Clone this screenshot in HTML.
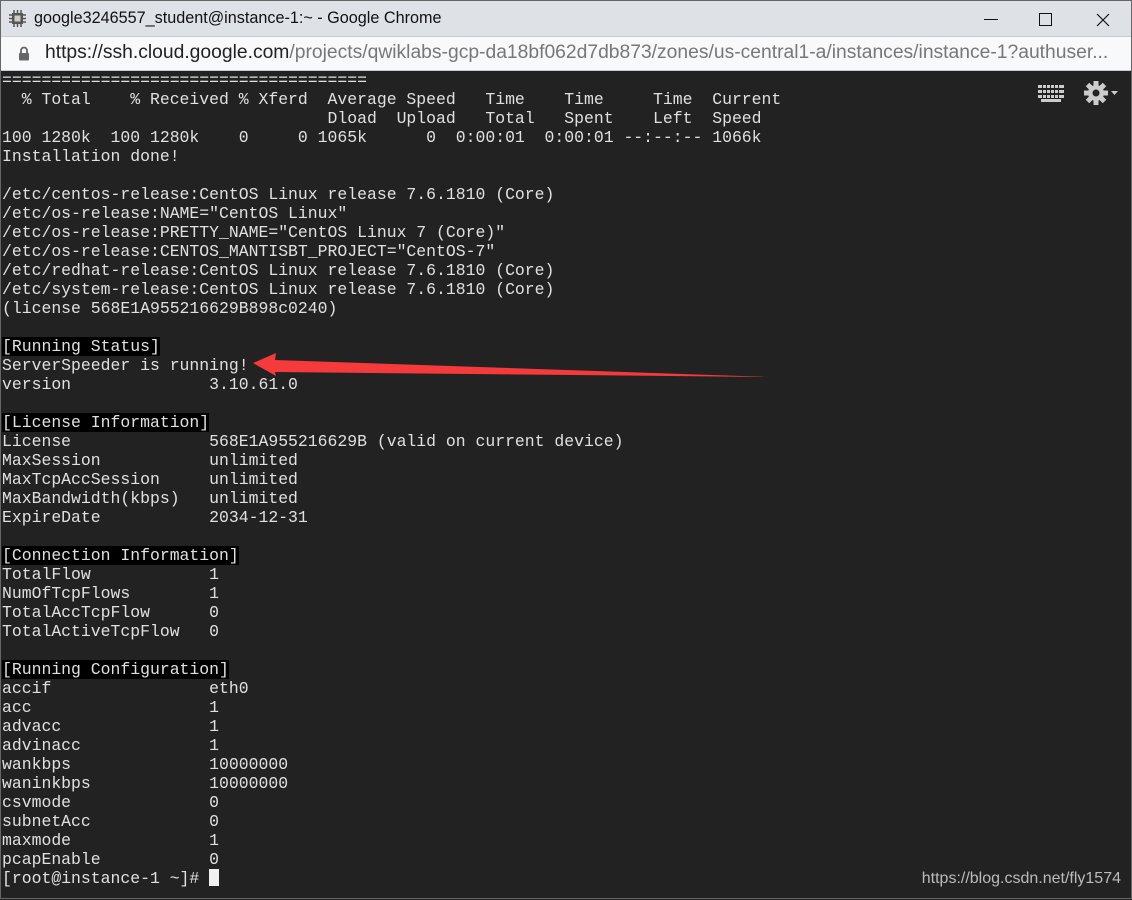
<!DOCTYPE html>
<html><head><meta charset="utf-8">
<style>
*{margin:0;padding:0;box-sizing:border-box}
html,body{width:1132px;height:899px;overflow:hidden;background:#222}
.win{position:absolute;left:0;top:0;width:1132px;height:899px;border:1px solid #666;background:#222}
.title{position:absolute;left:0;top:0;width:1130px;height:35px;background:#dee1e6;font-family:"Liberation Sans",sans-serif;font-size:16.2px;color:#111}
.title .t{position:absolute;left:33px;top:8px}
.addr{position:absolute;left:0;top:35px;width:1130px;height:35px;background:#f8f9fa;border-top:1px solid #c8cacd;border-bottom:1px solid #c8cacd;font-family:"Liberation Sans",sans-serif;font-size:19.3px;color:#777;white-space:nowrap}
.addr .u{position:absolute;left:44px;top:5px}
.addr .u b{font-weight:normal;color:#222}
pre{position:absolute;left:1px;top:70px;font-family:"Liberation Mono",monospace;font-size:16.45px;line-height:19px;color:#e0e0e0;letter-spacing:0}
.h{background:#000}
.cur{background:#f0f0f0;display:inline-block;width:10px;height:17px;vertical-align:-3px}
.wm{position:absolute;right:10px;top:869px;font-family:"Liberation Sans",sans-serif;font-size:16px;color:#bbb}
</style></head><body>
<div class="win">
<div class="title">
 <svg style="position:absolute;left:8px;top:9px" width="17" height="17" viewBox="0 0 17 17"><rect x="3" y="3" width="11" height="11" fill="#555"/><rect x="5.5" y="5.5" width="6" height="6" fill="#ccc"/><g stroke="#555" stroke-width="1.5"><path d="M5 0v3M8.5 0v3M12 0v3M5 14v3M8.5 14v3M12 14v3M0 5h3M0 8.5h3M0 12h3M14 5h3M14 8.5h3M14 12h3"/></g></svg>
 <span class="t">google3246557_student@instance-1:~ - Google Chrome</span>
 <div style="position:absolute;left:983px;top:18px;width:14px;height:1px;background:#111"></div>
 <div style="position:absolute;left:1038px;top:12px;width:13px;height:13px;border:1px solid #111"></div>
 <svg style="position:absolute;left:1095px;top:12px" width="14" height="14"><path d="M1 1L13 13M13 1L1 13" stroke="#111" stroke-width="1.2"/></svg>
</div>
<div class="addr">
 <svg style="position:absolute;left:17px;top:9px" width="12" height="15" viewBox="0 0 12 15"><path d="M3 7V4.5a3 3 0 0 1 6 0V7" fill="none" stroke="#666" stroke-width="1.8"/><rect x="1" y="7" width="10" height="7.5" rx="1" fill="#666"/></svg>
 <span class="u"><b>https://ssh.cloud.google.com</b>/projects/qwiklabs-gcp-da18bf062d7db873/zones/us-central1-a/instances/instance-1?authuser...</span>
</div>
<svg style="position:absolute;left:1036px;top:83px" width="28" height="18"><g fill="#ccc"><rect x="1" y="1" width="26" height="3"/><rect x="1" y="6" width="26" height="3"/><rect x="1" y="11" width="26" height="3"/><rect x="4" y="15" width="20" height="3"/></g><g fill="#222"><rect x="5" y="0" width="1" height="15"/><rect x="9" y="0" width="1" height="15"/><rect x="13" y="0" width="1" height="15"/><rect x="17" y="0" width="1" height="15"/><rect x="21" y="0" width="1" height="15"/></g></svg>
<svg style="position:absolute;left:1083px;top:79px" width="36" height="26" viewBox="0 0 36 26"><g fill="#ccc"><circle cx="12" cy="13" r="8"/><g transform="translate(12 13)"><rect x="-2.5" y="-12" width="5" height="24"/><rect x="-2.5" y="-12" width="5" height="24" transform="rotate(45)"/><rect x="-2.5" y="-12" width="5" height="24" transform="rotate(90)"/><rect x="-2.5" y="-12" width="5" height="24" transform="rotate(135)"/></g><path d="M27 11h7l-3.5 4z"/></g><circle cx="12" cy="13" r="3.5" fill="#222"/></svg>
<pre>=====================================
  % Total    % Received % Xferd  Average Speed   Time    Time     Time  Current
                                 Dload  Upload   Total   Spent    Left  Speed
100 1280k  100 1280k    0     0 1065k      0  0:00:01  0:00:01 --:--:-- 1066k
Installation done!

/etc/centos-release:CentOS Linux release 7.6.1810 (Core)
/etc/os-release:NAME="CentOS Linux"
/etc/os-release:PRETTY_NAME="CentOS Linux 7 (Core)"
/etc/os-release:CENTOS_MANTISBT_PROJECT="CentOS-7"
/etc/redhat-release:CentOS Linux release 7.6.1810 (Core)
/etc/system-release:CentOS Linux release 7.6.1810 (Core)
(license 568E1A955216629B898c0240)

<span class="h">[Running Status]</span>
ServerSpeeder is running!
version              3.10.61.0

<span class="h">[License Information]</span>
License              568E1A955216629B (valid on current device)
MaxSession           unlimited
MaxTcpAccSession     unlimited
MaxBandwidth(kbps)   unlimited
ExpireDate           2034-12-31

<span class="h">[Connection Information]</span>
TotalFlow            1
NumOfTcpFlows        1
TotalAccTcpFlow      0
TotalActiveTcpFlow   0

<span class="h">[Running Configuration]</span>
accif                eth0
acc                  1
advacc               1
advinacc             1
wankbps              10000000
waninkbps            10000000
csvmode              0
subnetAcc            0
maxmode              1
pcapEnable           0
[root@instance-1 ~]# <span class="cur"></span></pre>
<svg style="position:absolute;left:0;top:0" width="1132" height="899"><path d="M252 362L275 352L274 359L768 376L274 371L275 375Z" fill="#f43a3a"/></svg>
<div class="wm">https://blog.csdn.net/fly1574</div>
</div>
</body></html>
